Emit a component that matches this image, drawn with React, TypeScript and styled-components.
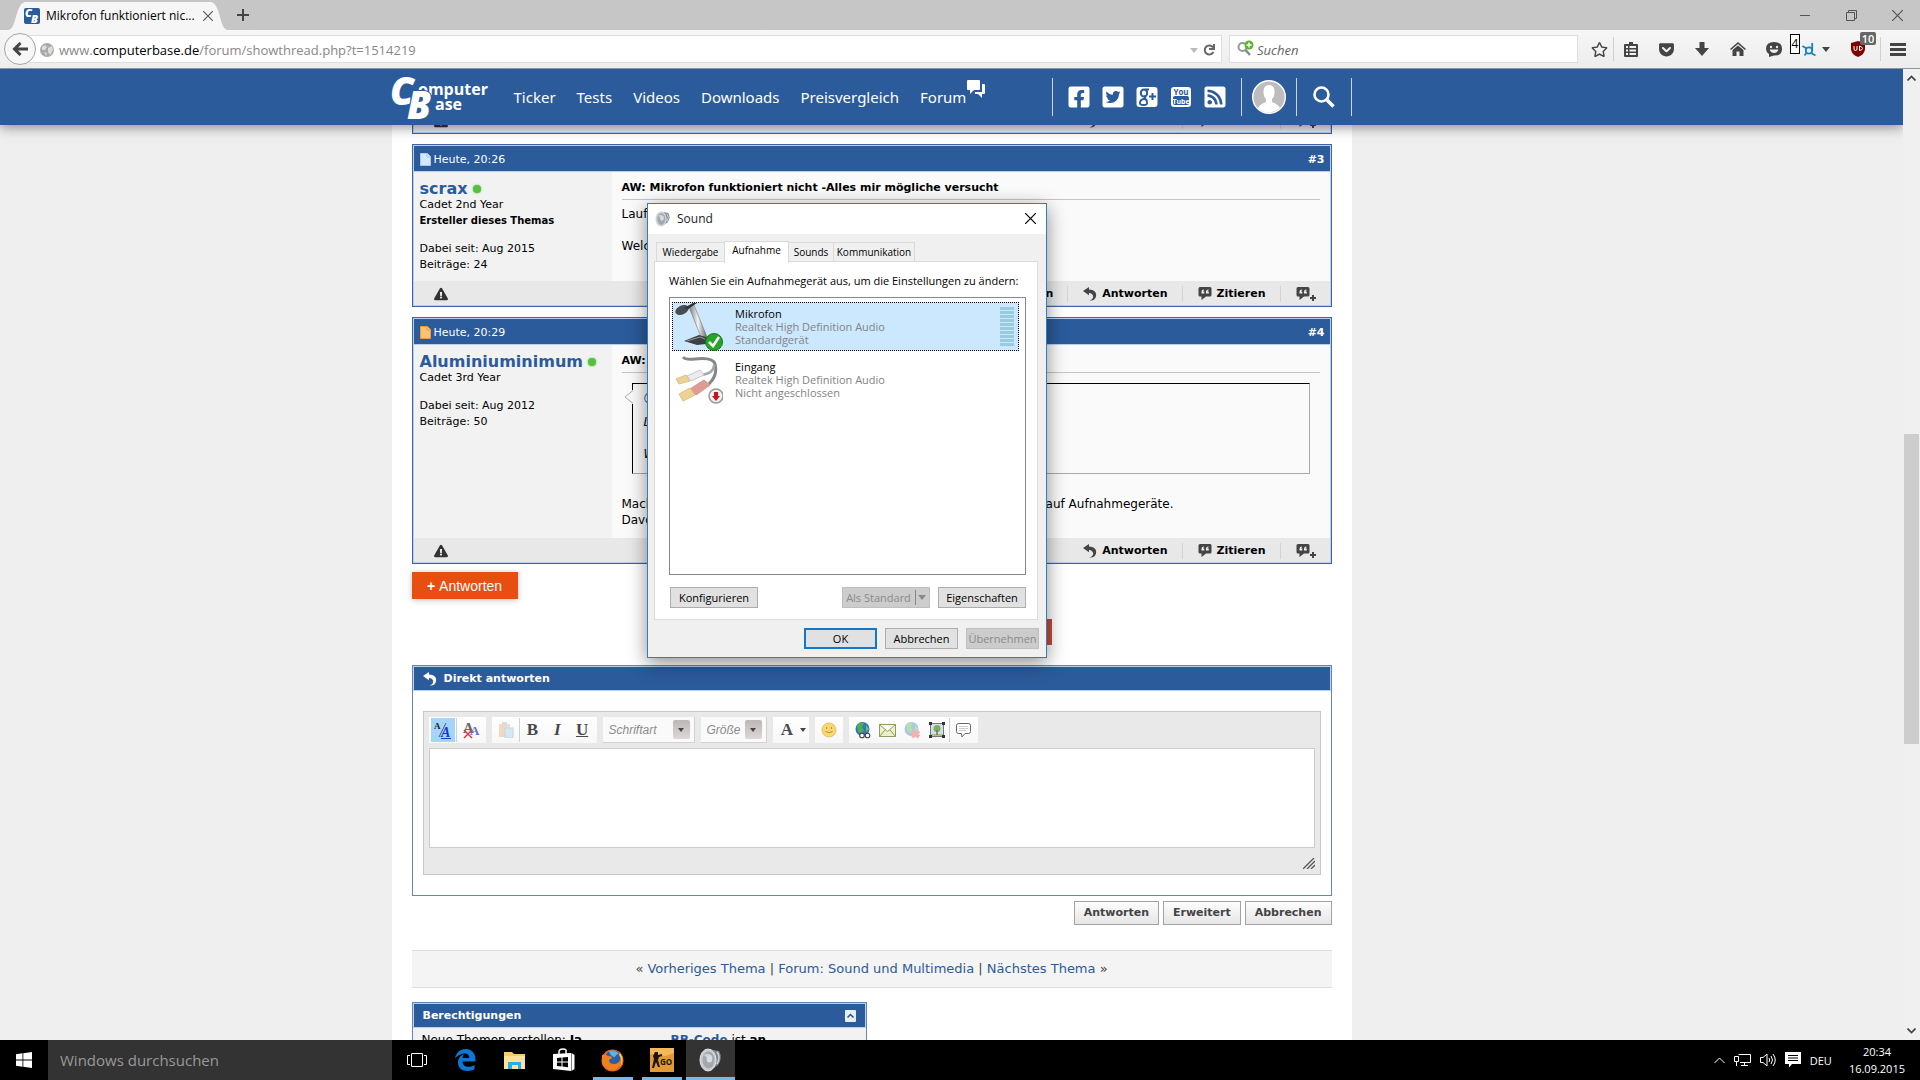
import React from 'react';
import styled, { createGlobalStyle, css } from 'styled-components';
import { FaFacebookSquare, FaTwitterSquare, FaRssSquare, FaRegStar, FaGetPocket, FaExclamationTriangle } from 'react-icons/fa';

const ui = '"Open Sans", "Noto Sans", sans-serif';
const forum = '"DejaVu Sans", Verdana, sans-serif';
const blue = '#2b5b9b';
const pale = '#b9cff0';

const Global = createGlobalStyle`
  *, *::before, *::after { box-sizing: border-box; }
  body { margin: 0; overflow: hidden; }
  button, input, select, textarea { font: inherit; color: inherit; margin: 0; }
  a { color: inherit; text-decoration: none; }
  ul, p, h2, h3 { margin: 0; padding: 0; list-style: none; font-size: inherit; }
`;

const Desktop = styled.div`
  position: relative;
  display: flex;
  flex-direction: column;
  height: 100vh;
  background: #efefef;
  font: 12px/16px ${forum};
  color: #000;
`;

/* ---------- browser chrome ---------- */
const TabBar = styled.div`
  display: flex;
  align-items: center;
  height: 30px;
  flex: none;
  padding-left: 8px;
  background: #c6c6c6;
  font: 12px/16px ${ui};
`;
const BrowserTab = styled.div`
  display: flex;
  align-items: center;
  align-self: flex-end;
  width: 220px;
  height: 28px;
  padding: 0 15px 0 16px;
  gap: 6px;
  background: #f6f6f6;
  clip-path: path('M0 28 C9 28 7 0 18 0 L202 0 C213 0 211 28 220 28 Z');
`;
const TabTitle = styled.span`
  flex: 1;
  white-space: nowrap;
`;
const Plain = styled.button`
  display: inline-flex;
  align-items: center;
  justify-content: center;
  padding: 0;
  border: 0;
  background: none;
  color: #444;
`;
const NewTab = styled(Plain)`
  width: 30px;
`;
const WindowControls = styled.div`
  display: flex;
  margin-left: auto;
  button { width: 46px; height: 28px; }
`;
const NavBar = styled.div`
  display: flex;
  align-items: center;
  flex: none;
  height: 39px;
  padding: 0 5px 0 4px;
  background: linear-gradient(#f6f6f6, #ededed);
  border-bottom: 1px solid #8f959e;
  font: 13px/20px ${ui};
  color: #444;
`;
const BackButton = styled(Plain)`
  position: relative;
  z-index: 1;
  width: 32px;
  height: 32px;
  margin-right: -12px;
  border: 1px solid #a5a5a5;
  border-radius: 50%;
  background: #f7f7f7;
`;
const AddressBar = styled.div`
  display: flex;
  align-items: center;
  flex: 1;
  height: 28px;
  padding: 2px 6px 0 15px;
  gap: 5px;
  background: #fff;
  border: 1px solid #dedede;
`;
const Address = styled.div`
  flex: 1;
  color: #888;
  outline: 0;
  b { font-weight: 400; color: #000; }
`;
const SearchBox = styled.label`
  display: flex;
  align-items: center;
  width: 349px;
  height: 28px;
  margin: 0 7px;
  padding: 0 7px;
  gap: 3px;
  background: #fff;
  border: 1px solid #dedede;
  input {
    flex: 1;
    min-width: 0;
    padding: 2px 0 0;
    border: 0;
    outline: 0;
    background: none;
    font-style: italic;
    font-size: 13px;
    &::placeholder { color: #666; opacity: 1; }
  }
`;
const ToolButton = styled(Plain)<{ $w?: number }>`
  position: relative;
  width: ${p => p.$w ?? 36}px;
  height: 36px;
`;
const AddonButton = styled(ToolButton)`
  justify-content: flex-end;
  padding-right: 6px;
  gap: 6px;
`;
const Separator = styled.span`
  width: 1px;
  height: 24px;
  background: #d0d0d0;
`;
const CountBox = styled.span`
  position: absolute;
  left: -2px;
  top: 3px;
  width: 10px;
  height: 20px;
  border: 1px solid #000;
  background: #fff;
  color: #000;
  font-size: 12px;
  line-height: 18px;
`;
const Badge = styled.span`
  position: absolute;
  right: 4px;
  top: 1px;
  width: 16px;
  height: 13px;
  border-radius: 2px;
  background: #666;
  color: #fff;
  font: 600 11px/13px ${ui};
`;

/* ---------- web page ---------- */
const Viewport = styled.div`
  display: flex;
  flex: 1;
  min-height: 0;
`;
const Page = styled.div`
  flex: 1;
  min-width: 0;
  overflow: hidden;
`;
const Wrap = styled.div`
  display: grid;
  grid-template-columns: minmax(0, 960px) 160px;
  max-width: 1120px;
  margin: 0 auto;
`;
const SiteHeader = styled.header`
  position: relative;
  z-index: 2;
  background: ${blue};
  box-shadow: 0 2px 12px rgba(0, 0, 0, 0.45);
  color: #fff;
`;
const HeaderRow = styled.div`
  display: flex;
  align-items: center;
  height: 56px;
`;
const LogoLink = styled.a`
  display: flex;
  svg { overflow: visible; }
`;
const SiteNav = styled.nav`
  display: flex;
  gap: 21px;
  margin-left: 24px;
  font: 15px/24px "Noto Sans", sans-serif;
`;
const ForumLink = styled.a`
  display: flex;
  gap: 1px;
  svg { margin-top: -5px; }
`;
const HeaderGroup = styled.div`
  display: flex;
  align-items: center;
  height: 38px;
  border-left: 1px solid #c9d6e8;
`;
const Social = styled(HeaderGroup)`
  margin-left: auto;
  padding: 0 14px;
  gap: 10px;
  a { display: flex; }
`;
const HeaderCell = styled(HeaderGroup)<{ $last?: boolean }>`
  width: ${p => (p.$last ? 56 : 55)}px;
  justify-content: center;
  border-right: ${p => (p.$last ? '1px solid #c9d6e8' : '0')};
  a { display: flex; }
`;
const Main = styled.main`
  min-height: 920px;
  padding: 0 20px;
  background: #fff;
`;

const Post = styled.article<{ $cut?: boolean }>`
  margin-top: ${p => (p.$cut ? -17 : 10)}px;
  border: 1px solid #3a66a8;
  box-shadow: inset 0 0 0 1px ${pale};
  padding: 1px;
  ${p => p.$cut && css`border-top: 0; padding-top: 0;`}
`;
const PostHead = styled.div`
  display: flex;
  align-items: center;
  height: 26px;
  padding: 2px 5px 0 6px;
  gap: 3px;
  background: ${blue};
  border-bottom: 1px solid ${pale};
  color: #fff;
  font-size: 11px;
  a { margin-left: auto; font-weight: 700; }
`;
const PostBody = styled.div`
  display: grid;
  grid-template-columns: 198px minmax(0, 1fr);
  background: #fafafa;
`;
const UserInfo = styled.div`
  padding: 9px 6px 8px;
  background: #f2f2f2;
  font-size: 11px;
  strong { font-size: 10px; }
  p + p.gap { margin-top: 12px; }
`;
const UserName = styled.a`
  display: flex;
  align-items: center;
  height: 16px;
  gap: 5px;
  color: ${blue};
  font-size: 16px;
  font-weight: 700;
  &::after {
    content: '';
    width: 8px;
    height: 8px;
    border-radius: 50%;
    background: #55c23f;
    box-shadow: 0 0 2px #55c23f;
  }
`;
const Message = styled.div`
  padding: 8px 10px 10px;
  white-space: nowrap;
`;
const Title = styled.h2`
  height: 20px;
  margin-bottom: 6px;
  border-bottom: 1px solid #c4c4c4;
  font-size: 11px;
`;
const Quote = styled.blockquote`
  position: relative;
  height: 91px;
  margin: 10px 10px 22px;
  padding: 5px 11px;
  border: 1px solid #aaa;
  border-top-color: #000;
  border-left-color: #000;
  font-style: italic;
  p { margin-bottom: 16px; }
  p:first-of-type { margin-bottom: 9px; }
  a { color: ${blue}; }
`;
const QuoteArrow = styled.svg`
  position: absolute;
  left: -9px;
  top: 6px;
  background: #fafafa;
`;
const PostFoot = styled.div`
  display: flex;
  align-items: center;
  height: 24px;
  background: #e8e8e8;
  padding: 1px 0 0 20px;
  color: #444;
`;
const Actions = styled.div`
  display: flex;
  margin-left: auto;
  button + button { border-left: 1px solid #d4d4d4; }
`;
const Action = styled(Plain)`
  height: 16px;
  padding: 0 14px 0 15px;
  gap: 5px;
  color: #000;
  font-weight: 700;
  font-size: 11px;
`;
const ReplyLink = styled.a`
  display: inline-flex;
  align-items: center;
  justify-content: center;
  width: 106px;
  height: 27px;
  margin-top: 8px;
  gap: 4px;
  background: #e84e10;
  box-shadow: 0 1px 6px rgba(0, 0, 0, 0.25);
  color: #fff;
  font: 14px/20px "Liberation Sans", Arial, sans-serif;
`;
const Notice = styled.div`
  width: 360px;
  height: 26px;
  margin: 20px auto;
  background: #c94a36;
`;
const Box = styled.section<{ $half?: boolean }>`
  width: ${p => (p.$half ? '455px' : 'auto')};
  max-width: 100%;
  border: 1px solid #6686b0;
  background: ${p => (p.$half ? '#f2f2f2' : '#fff')};
`;
const BoxHead = styled.h3<{ $spread?: boolean }>`
  display: flex;
  align-items: center;
  height: 25px;
  padding: 1px 9px 0;
  gap: 7px;
  border: 1px solid ${pale};
  background: ${blue};
  color: #fff;
  font-size: 11px;
  justify-content: ${p => (p.$spread ? 'space-between' : 'flex-start')};
`;
const Editor = styled.div`
  margin: 20px 10px;
  padding: 5px;
  border: 1px solid #c9c9c9;
  background: #e9e9e9;
`;
const Tools = styled.div`
  display: flex;
  gap: 6px;
  margin-bottom: 5px;
`;
const ToolGroup = styled.div<{ $w: number }>`
  display: flex;
  align-items: center;
  justify-content: space-around;
  width: ${p => p.$w}px;
  height: 26px;
  padding: 1px 2px;
  background: linear-gradient(#fff, #f7f7f7);
`;
const Tool = styled(Plain)<{ $on?: boolean }>`
  width: 24px;
  height: 24px;
  background: ${p => (p.$on ? '#a5d5fb' : 'none')};
  color: #48484f;
  font: 700 17px/20px "Liberation Serif", serif;
`;
const SelectTool = styled.label<{ $w: number }>`
  display: grid;
  grid-template-columns: 1fr 17px;
  align-items: center;
  width: ${p => p.$w}px;
  height: 26px;
  padding: 0 4px 0 6px;
  background: #fafafa;
  border-bottom: 1px solid #d2d2d2;
  border-right: 1px solid #d2d2d2;
  select {
    grid-area: 1 / 1 / 2 / 3;
    appearance: none;
    padding: 0;
    border: 0;
    background: none;
    color: #8a8a8a;
    font: italic 12px/20px "Liberation Sans", Arial, sans-serif;
  }
  span {
    grid-area: 1 / 2 / 2 / 3;
    display: flex;
    align-items: center;
    justify-content: center;
    height: 19px;
    border-radius: 2px;
    background: linear-gradient(#bdb6b6, #dcd8d8);
    pointer-events: none;
  }
`;
const Field = styled.textarea`
  display: block;
  width: 100%;
  height: 100px;
  border: 1px solid #ccc;
  background: #fff;
  resize: none;
  outline: 0;
`;
const Grip = styled.svg`
  display: block;
  margin: 10px 0 0 auto;
`;
const FormButtons = styled.div`
  display: flex;
  justify-content: flex-end;
  gap: 4px;
  margin: 5px 0 25px;
`;
const FormButton = styled.button`
  height: 24px;
  padding: 0 9px;
  border: 1px solid #a3a3a3;
  background: linear-gradient(#fdfdfd, #e6e6e6);
  color: #444;
  font-size: 11px;
  font-weight: 700;
`;
const Pager = styled.nav`
  margin-bottom: 14px;
  padding: 10px 0;
  border-top: 1px solid #ddd;
  border-bottom: 1px solid #ddd;
  background: #f4f4f4;
  text-align: center;
  color: #444;
  font-size: 13px;
  a { color: ${blue}; }
`;
const Rights = styled.div`
  display: grid;
  grid-template-columns: 249px 1fr;
  padding: 4px 9px;
  a { color: ${blue}; font-weight: 700; }
`;
const Scrollbar = styled.div`
  display: flex;
  flex-direction: column;
  align-items: center;
  justify-content: space-between;
  width: 17px;
  padding: 6px 0;
  background: #f0f0f0;
  z-index: 3;
`;
const Thumb = styled.div`
  width: 15px;
  height: 310px;
  margin-bottom: -68px;
  background: #cdcdcd;
`;

/* ---------- sound dialog ---------- */
const Dialog = styled.section`
  position: absolute;
  left: 647px;
  top: 203px;
  z-index: 10;
  width: 400px;
  border: 1px solid #2d7fc0;
  background: #f0f0f0;
  box-shadow: 0 5px 18px rgba(0, 0, 0, 0.45);
  font: 11px/13px ${ui};
`;
const DialogTitle = styled.div`
  display: flex;
  align-items: center;
  height: 30px;
  padding: 0 10px 1px 7px;
  gap: 6px;
  background: #fff;
  color: #222;
  font-size: 12px;
  button { margin-left: auto; color: #000; }
`;
const Tabs = styled.div`
  display: flex;
  align-items: flex-end;
  height: 27px;
  padding: 0 8px;
`;
const Tab = styled.button<{ $on?: boolean; $w: number }>`
  width: ${p => p.$w}px;
  height: ${p => (p.$on ? 22 : 19)}px;
  margin: ${p => (p.$on ? '0 0 -2px' : '0')};
  padding: ${p => (p.$on ? '0 0 4px' : '1px 0 0')};
  border: 1px solid #d9d9d9;
  border-bottom: 0;
  background: ${p => (p.$on ? '#fff' : '#f0f0f0')};
  z-index: ${p => (p.$on ? 1 : 0)};
  color: #000;
  font-size: 10px;
  & + & { margin-left: -1px; }
`;
const Panel = styled.div`
  margin: 0 8px 0 6px;
  padding: 12px 11px 11px 14px;
  border: 1px solid #dcdcdc;
  background: #fff;
`;
const DeviceList = styled.ul`
  height: 278px;
  margin: 10px 0 12px;
  padding: 4px 6px 4px 2px;
  border: 1px solid #828790;
`;
const Device = styled.li<{ $on?: boolean }>`
  display: flex;
  align-items: center;
  height: 49px;
  margin-bottom: 4px;
  padding: 0 4px 0 2px;
  gap: 12px;
  border: 1px dotted ${p => (p.$on ? '#000' : 'transparent')};
  background: ${p => (p.$on ? '#cce8ff' : 'none')};
  color: #838383;
  strong { display: block; font-weight: 400; color: #000; }
`;
const Level = styled.span`
  width: 14px;
  height: 39px;
  margin-left: auto;
  background: repeating-linear-gradient(#99cbe0 0 3px, transparent 3px 4px);
`;
const ButtonRow = styled.div<{ $foot?: boolean }>`
  display: flex;
  justify-content: flex-end;
  gap: 8px;
  padding: ${p => (p.$foot ? '8px 7px 8px' : '0 0 0 1px')};
  button:first-child { margin-right: ${p => (p.$foot ? '0' : 'auto')}; }
`;
const WinButton = styled.button<{ $w: number; $default?: boolean }>`
  display: flex;
  align-items: center;
  justify-content: center;
  gap: 4px;
  width: ${p => p.$w}px;
  height: 21px;
  padding: 0;
  border: ${p => (p.$default ? '2px solid #0f78d0' : '1px solid #adadad')};
  background: #e1e1e1;
  color: #000;
  &:disabled { background: #cccccc; border-color: #bfbfbf; color: #8a8a8a; }
  i { width: 1px; height: 15px; margin-right: -2px; background: #888; }
`;

/* ---------- taskbar ---------- */
const Taskbar = styled.footer`
  display: flex;
  align-items: stretch;
  flex: none;
  height: 40px;
  z-index: 5;
  background: #000;
  color: #fff;
  font: 11px/17px ${ui};
`;
const TaskButton = styled(Plain)<{ $open?: boolean; $active?: boolean }>`
  width: 49px;
  background: ${p => (p.$active ? '#333' : 'none')};
  border-bottom: 3px solid transparent;
  border-top: 3px solid transparent;
  border-bottom-color: ${p => (p.$active ? '#76b9ed' : 'transparent')};
  background-image: ${p => (p.$open ? 'linear-gradient(#76b9ed, #76b9ed)' : 'none')};
  background-size: 40px 3px;
  background-position: 50% 100%;
  background-repeat: no-repeat;
  background-origin: border-box;
  color: #fff;
`;
const StartButton = styled(Plain)`
  width: 48px;
  color: #fff;
`;
const TaskSearch = styled.input`
  width: 344px;
  padding: 0 12px;
  border: 0;
  border-radius: 0;
  outline: 0;
  background: #333;
  font-size: 15px;
  &::placeholder { color: #999; opacity: 1; }
`;
const Tray = styled.div`
  display: flex;
  align-items: center;
  gap: 9px;
  margin-left: auto;
  padding-right: 15px;
  time { margin-left: 8px; text-align: center; }
`;

/* ---------- drawings ---------- */
const CbMark = () => (
  <svg width="16" height="16" viewBox="0 0 16 16" overflow="visible">
    <rect width="16" height="16" rx="2" fill={blue} />
    <text x="1" y="9" fontFamily="Open Sans" fontWeight="800" fontStyle="italic" fontSize="11" fill="#fff">C</text>
    <text x="7" y="15" fontFamily="Open Sans" fontWeight="800" fontStyle="italic" fontSize="11" fill="#fff">B</text>
  </svg>
);
const Logo = () => (
  <svg width="98" height="46" viewBox="0 0 98 46" fill="#fff" fontFamily="Open Sans" fontWeight="700">
    <text x="-2" y="31" fontSize="38" fontWeight="800" fontStyle="italic">C</text>
    <text x="26" y="21" fontSize="16" stroke={blue} strokeWidth="2" paintOrder="stroke">omputer</text>
    <text x="43" y="36" fontSize="16">ase</text>
    <text x="15" y="45" fontSize="38" fontWeight="800" fontStyle="italic" stroke={blue} strokeWidth="2" paintOrder="stroke">B</text>
  </svg>
);
const Cross = ({ s = 10, c = '#555' }: { s?: number; c?: string }) => (
  <svg width={s} height={s} viewBox="0 0 10 10" stroke={c} strokeWidth="1.1"><path d="M0 0L10 10M10 0L0 10" /></svg>
);
const Globe = () => (
  <svg width="14" height="14" viewBox="0 0 14 14"><circle cx="7" cy="7" r="7" fill="#aaa" /><path d="M2 4l3-2 2 2-2 3-3 0zM8 5l4-2 1 4-3 5-2-3zM4 9l3 1-1 3z" fill="#ddd" /></svg>
);
const ReplyIcon = ({ c = '#444' }: { c?: string }) => (
  <svg width="14" height="14" viewBox="0 0 14 14" fill={c}><path d="M0 4L6 0V2.500C11 2.500 14 5.500 13 9.500C12.500 12 10 14 6.500 13.500C10 12.500 11 10 9.500 7.800C8.700 6.500 7.500 6 6 6V8.300Z" /></svg>
);
const QuoteIcon = ({ plus }: { plus?: boolean }) => (
  <svg width={plus ? 20 : 14} height="14" viewBox={plus ? '0 0 20 14' : '0 0 14 14'} fill="#444">
    <path d="M2 0H12Q13.500 0 13.500 1.500V8Q13.500 9.500 12 9.500H8L3.500 13V9.500H2Q.5 9.500 .5 8V1.500Q.5 0 2 0Z" />
    <path d="M3.500 6.500V4.500Q3.500 2.500 6 2.500V3.600Q5 3.600 5 4.500H6.300V6.500ZM8 6.500V4.500Q8 2.500 10.500 2.500V3.600Q9.500 3.600 9.500 4.500H10.800V6.500Z" fill="#eee" />
    {plus && <path d="M16 8H18V10H20V12H18V14H16V12H14V10H16Z" />}
  </svg>
);
const GooglePlus = () => (
  <svg width="24" height="24" viewBox="0 0 24 24" fill="none" stroke={blue}>
    <rect x="1.500" y="2" width="21" height="20" rx="3" fill="#fff" stroke="none" />
    <ellipse cx="9" cy="8" rx="3.200" ry="3.500" strokeWidth="2" />
    <path d="M10 4.500H14M10 11Q9 12 11 13.500M12 17Q12 14 9 14T5 17T8.500 20T12 17Z" strokeWidth="1.800" />
    <path d="M17.500 8V15M14 11.500H21" strokeWidth="2" />
  </svg>
);
const PageIcon = ({ c, s }: { c: string; s: string }) => (
  <svg width="11" height="13" viewBox="0 0 11 13"><path d="M.5 .5H7.500L10.500 3.500V12.500H.5Z" fill={c} stroke={s} /><path d="M7 1V4H10" fill="none" stroke={s} /></svg>
);
const Warn = () => <FaExclamationTriangle size={14} color="#333" />;
const Speaker = ({ s = 16 }: { s?: number }) => (
  <svg width={s} height={s} viewBox="0 0 24 24">
    <path d="M9 1L20 3Q24 10 19 17L11 23Z" fill="#7f858d" />
    <path d="M18 4Q22 9 18 16" stroke="#d4d8dc" strokeWidth="1.500" fill="none" />
    <ellipse cx="9" cy="12" rx="8" ry="11" fill="#c9cdd2" stroke="#e2e4e7" strokeWidth="1" />
    <ellipse cx="9.500" cy="12" rx="6" ry="8.500" fill="#a2a8b0" />
    <path d="M5 7Q9 4 13 8L10 12Z" fill="#ced3d9" />
    <ellipse cx="10.500" cy="11" rx="2.800" ry="3.600" fill="#d8dce0" />
  </svg>
);
const Mic = () => (
  <svg width="48" height="48" viewBox="0 0 48 48">
    <defs><linearGradient id="arm" x1="0" x2="1"><stop offset="0" stopColor="#777" /><stop offset=".5" stopColor="#f4f4f4" /><stop offset="1" stopColor="#666" /></linearGradient></defs>
    <path d="M14 4L19 2L32 34H26Z" fill="url(#arm)" stroke="#777" strokeWidth=".6" />
    <path d="M9 38L24 32L34 35L31 41L22 42Z" fill="#3c3f43" />
    <path d="M12 38L25 34L30 36" stroke="#999" fill="none" />
    <ellipse cx="7" cy="7" rx="7" ry="4.500" transform="rotate(-25 7 7)" fill="#4a4c4f" />
    <path d="M9 5L18 0H22L13 6Z" fill="#303234" />
    <circle cx="39" cy="39" r="8.500" fill="#29a329" stroke="#0f7a12" />
    <path d="M34 39L38 43L44 34" stroke="#fff" strokeWidth="2.600" fill="none" />
  </svg>
);
const Cable = () => (
  <svg width="48" height="48" viewBox="0 0 48 48" fill="none">
    <path d="M8 1Q10 4 20 3Q38 1 40 8Q43 19 34 28" stroke="#85888b" strokeWidth="3" />
    <path d="M39 9Q39 17 27 19" stroke="#a4a7aa" strokeWidth="2.500" />
    <path d="M12 20L25 14L29 19L16 25Z" fill="#ececf0" stroke="#c7c9ce" />
    <path d="M15 33L29 24L35 29L21 39Z" fill="#e39a95" stroke="#dc8e8a" />
    <path d="M1 23L11 19L15 25L4 28Z" fill="#ead295" stroke="#dcc389" />
    <path d="M4 38L15 32L20 39L8 45Z" fill="#ecd296" stroke="#dcc080" />
    <circle cx="41" cy="40" r="7" fill="#f0f0f0" stroke="#999" strokeWidth="1.500" />
    <path d="M39 36H43V40H45L41 45L37 40H39Z" fill="#c4161c" />
  </svg>
);
const Chevron = ({ down }: { down?: boolean }) => (
  <svg width="9" height="6" viewBox="0 0 9 6" fill="none" stroke="#444" strokeWidth="1.700"><path d={down ? 'M.5 .5L4.500 4.500L8.500 .5' : 'M.5 5.500L4.500 1.500L8.500 5.500'} /></svg>
);
const Caret = ({ c = '#444' }: { c?: string }) => <svg width="8" height="5" viewBox="0 0 8 5"><path d="M0 0H8L4 5Z" fill={c} /></svg>;
const SmallCaret = () => <svg width="6" height="4" viewBox="0 0 6 4"><path d="M0 0H6L3 4Z" fill="#444" /></svg>;
const EarthTool = ({ faded }: { faded?: boolean }) => (
  <svg width="16" height="17" viewBox="0 0 16 17" opacity={faded ? 0.4 : 1}>
    <circle cx="7.500" cy="7" r="7" fill="#3577bd" /><path d="M2 3Q6-1 9 1L7 5L9 8L6 12L3 9Z" fill="#50ae52" /><path d="M11 3L14 7L11 10Z" fill="#70be55" />
    {faded ? <path d="M8 9L15 15M15 9L8 15" stroke="#e34b4b" strokeWidth="4" /> : <g fill="#fff" stroke="#444" strokeWidth="1.100"><circle cx="7" cy="13.500" r="2.300" /><circle cx="12.500" cy="13.500" r="2.300" /></g>}
  </svg>
);

const Foot = ({ edit }: { edit?: boolean }) => (
  <PostFoot>
    <Plain aria-label="Beitrag melden"><Warn /></Plain>
    <Actions>
      {edit && <Action>Bearbeiten</Action>}
      <Action><ReplyIcon />Antworten</Action>
      <Action><QuoteIcon />Zitieren</Action>
      <Action aria-label="Mehrfachzitat"><QuoteIcon plus /></Action>
    </Actions>
  </PostFoot>
);

export default function App() {
  return (
    <Desktop>
      <Global />
      <TabBar>
        <BrowserTab><CbMark /><TabTitle>Mikrofon funktioniert nic...</TabTitle><Plain aria-label="Tab schließen"><Cross s={10} /></Plain></BrowserTab>
        <NewTab aria-label="Neuer Tab"><svg width="12" height="12" stroke="#444" strokeWidth="2"><path d="M6 0V12M0 6H12" /></svg></NewTab>
        <WindowControls>
          <Plain aria-label="Minimieren"><svg width="10" height="10" stroke="#555"><path d="M0 5.500H10" /></svg></Plain>
          <Plain aria-label="Verkleinern"><svg width="11" height="11" fill="none" stroke="#555"><path d="M.5 2.500H8.500V10.500H.5ZM2.500 2.500V.5H10.500V8.500H8.500" /></svg></Plain>
          <Plain aria-label="Schließen"><Cross s={11} /></Plain>
        </WindowControls>
      </TabBar>
      <NavBar>
        <BackButton aria-label="Zurück"><svg width="16" height="14" viewBox="0 0 16 14" fill="none" stroke="#444" strokeWidth="3"><path d="M16 7H3M8.500 1L2.500 7L8.500 13" /></svg></BackButton>
        <AddressBar>
          <Globe />
          <Address role="textbox" aria-label="Adresse" contentEditable suppressContentEditableWarning spellCheck={false}>www.<b>computerbase.de</b>/forum/showthread.php?t=1514219</Address>
          <Caret c="#bbb" />
          <Plain aria-label="Neu laden"><svg width="12" height="12" viewBox="0 0 12 12" fill="none" stroke="#666" strokeWidth="2"><path d="M10 3.500A4.500 4.500 0 1 0 10.300 8" /><path d="M11 0V5H6" /></svg></Plain>
        </AddressBar>
        <SearchBox>
          <svg width="17" height="18" viewBox="0 0 17 18"><circle cx="5.500" cy="7" r="4" fill="none" stroke="#999" strokeWidth="2" /><path d="M8.500 10L13 15" stroke="#888" strokeWidth="2.500" /><circle cx="12" cy="5" r="4.500" fill="#5cb531" /><path d="M12 2.500V7.500M9.500 5H14.500" stroke="#fff" strokeWidth="1.400" /></svg>
          <input placeholder="Suchen" aria-label="Suchen" />
        </SearchBox>
        <ToolButton $w={28} aria-label="Lesezeichen"><FaRegStar size={17} /></ToolButton>
        <Separator />
        <ToolButton $w={34} aria-label="Lesezeichenliste"><svg width="14" height="15" viewBox="0 0 14 15"><path d="M5 0H9V2H13Q14 2 14 3V14Q14 15 13 15H1Q0 15 0 14V3Q0 2 1 2H5Z" fill="#444" /><path d="M2 5H4M5.500 5H12M2 8.500H4M5.500 8.500H12M2 12H4M5.500 12H12" stroke="#f3f3f3" strokeWidth="1.800" /></svg></ToolButton>
        <ToolButton aria-label="Pocket"><FaGetPocket size={17} /></ToolButton>
        <ToolButton aria-label="Downloads"><svg width="14" height="14" viewBox="0 0 14 14" fill="#444"><path d="M4.500 0H9.500V6H14L7 14L0 6H4.500Z" /></svg></ToolButton>
        <ToolButton aria-label="Startseite"><svg width="16" height="14" viewBox="0 0 16 14" fill="#444"><path d="M8 0L16 7L15 8L8 2L1 8L0 7Z" /><path d="M8 3.500L13.500 8V14H9.500V9.500H6.500V14H2.500V8Z" /></svg></ToolButton>
        <ToolButton aria-label="Hello"><svg width="16" height="15" viewBox="0 0 16 15"><path d="M8 0Q16 0 16 7T8 13.500L3 15L3 12Q0 10 0 7Q0 0 8 0Z" fill="#444" /><circle cx="5" cy="5" r="1.200" fill="#eee" /><circle cx="11" cy="5" r="1.200" fill="#eee" /><path d="M3.500 7.500H12.500Q11 11 8 11T3.500 7.500Z" fill="#eee" /></svg></ToolButton>
        <AddonButton $w={44} aria-label="Erweiterung">
          <CountBox>4</CountBox>
          <svg width="15" height="15" viewBox="0 0 15 15" fill="none" stroke="#1b82bd" strokeWidth="1.800"><circle cx="8" cy="8.500" r="3.200" /><path d="M11.200 9V1M5.500 6.500L1.500 4M10 11L14.500 13.500M5.500 11L3.500 13.500" /></svg><Caret />
        </AddonButton>
        <ToolButton $w={44} aria-label="uBlock">
          <svg width="14" height="16" viewBox="0 0 14 16"><path d="M7 0L14 2V8Q14 13 7 16Q0 13 0 8V2Z" fill="#800000" /><path d="M3 5V8Q3 9.500 4.500 9.500T6 8V5M8.500 5V9.500Q11.500 9 11.500 7.500T8.500 5" fill="none" stroke="#fff" /></svg>
          <Badge>10</Badge>
        </ToolButton>
        <Separator />
        <ToolButton $w={34} aria-label="Menü"><svg width="16" height="13" stroke="#444" strokeWidth="3"><path d="M0 1.500H16M0 6.500H16M0 11.500H16" /></svg></ToolButton>
      </NavBar>

      <Viewport>
        <Page>
          <SiteHeader>
            <Wrap>
              <HeaderRow>
                <LogoLink href="#home" aria-label="ComputerBase"><Logo /></LogoLink>
                <SiteNav>
                  <a href="#ticker">Ticker</a><a href="#tests">Tests</a><a href="#videos">Videos</a><a href="#downloads">Downloads</a><a href="#preise">Preisvergleich</a>
                  <ForumLink href="#forum">Forum<svg width="19" height="18" viewBox="0 0 19 18" fill="#fff"><path d="M1 0H12Q13 0 13 1V9Q13 10 12 10H7L3 14V10H1Q0 10 0 9V1Q0 0 1 0Z" /><path d="M15 4H17Q18 4 18 5V13Q18 14 17 14H15V18L11 14H8V12H15Z" /></svg></ForumLink>
                </SiteNav>
                <Social>
                  <a href="#fb" aria-label="Facebook"><FaFacebookSquare size={24} /></a>
                  <a href="#tw" aria-label="Twitter"><FaTwitterSquare size={24} /></a>
                  <a href="#gp" aria-label="Google+"><GooglePlus /></a>
                  <a href="#yt" aria-label="YouTube"><svg width="24" height="24" viewBox="0 0 24 24"><rect x="2" y="2" width="20" height="20" rx="3" fill="#fff" /><rect x="4" y="11" width="16" height="9" rx="2" fill={blue} /><text x="12" y="10" textAnchor="middle" fontFamily="Open Sans" fontSize="8" fontWeight="700" fill={blue}>You</text><text x="12" y="18.500" textAnchor="middle" fontFamily="Open Sans" fontSize="7" fontWeight="700" fill="#fff">Tube</text></svg></a>
                  <a href="#rss" aria-label="RSS"><FaRssSquare size={24} /></a>
                </Social>
                <HeaderCell><a href="#profil" aria-label="Profil"><svg width="34" height="34" viewBox="0 0 34 34"><circle cx="17" cy="17" r="16.300" fill="#bdbdbd" stroke="#fff" strokeWidth="1.400" /><path d="M17 5Q22.500 5 22.500 12Q22.500 17 20 19V22Q26 24 28 28Q17 37 6 28Q8 24 14 22V19Q11.500 17 11.500 12Q11.500 5 17 5Z" fill="#fff" /></svg></a></HeaderCell>
                <HeaderCell $last><a href="#suche" aria-label="Suche"><svg width="22" height="22" viewBox="0 0 22 22" fill="none" stroke="#fff"><circle cx="8.500" cy="8.500" r="7" strokeWidth="2.600" /><path d="M13.500 13.500L20.500 20.500" strokeWidth="3.600" /></svg></a></HeaderCell>
              </HeaderRow>
            </Wrap>
          </SiteHeader>
          <Wrap>
            <Main>
              <Post $cut><Foot /></Post>
              <Post>
                <PostHead><PageIcon c="#d5e8fa" s="#a9c8ea" />Heute, 20:26<a href="#p3">#3</a></PostHead>
                <PostBody>
                  <UserInfo>
                    <UserName href="#scrax">scrax</UserName>
                    <p>Cadet 2nd Year</p><p><strong>Ersteller dieses Themas</strong></p>
                    <p className="gap">Dabei seit: Aug 2015</p><p>Beiträge: 24</p>
                  </UserInfo>
                  <Message><Title>AW: Mikrofon funktioniert nicht -Alles mir mögliche versucht</Title><p>Laufwerk</p><br /><p>Welche</p></Message>
                </PostBody>
                <Foot edit />
              </Post>
              <Post>
                <PostHead><PageIcon c="#fcc274" s="#f0983c" />Heute, 20:29<a href="#p4">#4</a></PostHead>
                <PostBody>
                  <UserInfo>
                    <UserName href="#alu">Aluminiuminimum</UserName>
                    <p>Cadet 3rd Year</p>
                    <p className="gap">Dabei seit: Aug 2012</p><p>Beiträge: 50</p>
                  </UserInfo>
                  <Message>
                    <Title>AW: Mikrofon</Title>
                    <Quote><QuoteArrow width="9" height="14" viewBox="0 0 9 14" fill="none" stroke="#aaa"><path d="M9 .5L1 7L9 13.500" /></QuoteArrow><p><a href="#zitat">@ scrax</a></p><p>Laufwerk</p><p>Welche</p></Quote>
                    <p>Mache einen Rechtsklick auf das Lautsprechersymbol und klicke dann auf Aufnahmegeräte.</p>
                    <p>Davon</p>
                  </Message>
                </PostBody>
                <Foot />
              </Post>
              <ReplyLink href="#antworten"><b>+</b>Antworten</ReplyLink>
              <Notice />
              <Box>
                <BoxHead><ReplyIcon c="#fff" />Direkt antworten</BoxHead>
                <Editor>
                  <Tools>
                    <ToolGroup $w={57}>
                      <Tool $on aria-label="Editor umschalten"><svg width="18" height="18" fontFamily="Liberation Serif" fontWeight="700" fontStyle="italic"><text x="0" y="8" fontSize="9" fontStyle="normal" fill="#222">A</text><path d="M5 16L12 2" stroke="#556" /><text x="7" y="16" fontSize="14" fill="#1438d8">A</text><path d="M7 17.500H17" stroke="#1438d8" /></svg></Tool>
                      <Separator />
                      <Tool aria-label="Formatierung entfernen"><svg width="18" height="18" fontFamily="Liberation Serif" fontWeight="700"><text x="1" y="12" fontSize="15" fill="#666">A</text><text x="8" y="14" fontSize="13" fill="#5a6fdd">A</text><path d="M2 9L10 17M10 9L2 17" stroke="#df3a34" strokeWidth="1.500" /></svg></Tool>
                    </ToolGroup>
                    <ToolGroup $w={105}>
                      <Tool aria-label="Einfügen"><svg width="16" height="16" opacity=".5"><rect x="1" y="2" width="11" height="13" rx="1" fill="#e6b987" /><rect x="4" y="0" width="5" height="4" fill="#bbb" /><rect x="7" y="6" width="8" height="10" fill="#b7d5ef" stroke="#8fb5d8" /></svg></Tool>
                      <Separator />
                      <Tool>B</Tool><Tool><i>I</i></Tool><Tool><u>U</u></Tool>
                    </ToolGroup>
                    <SelectTool $w={92}><select aria-label="Schriftart"><option>Schriftart</option></select><span><SmallCaret /></span></SelectTool>
                    <SelectTool $w={66}><select aria-label="Größe"><option>Größe</option></select><span><SmallCaret /></span></SelectTool>
                    <ToolGroup $w={36}><Tool aria-label="Schriftfarbe">A</Tool><SmallCaret /></ToolGroup>
                    <ToolGroup $w={28}><Tool aria-label="Smilies"><svg width="16" height="16" viewBox="0 0 16 16"><circle cx="8" cy="8" r="7" fill="#f8d873" stroke="#e9bf62" /><path d="M4.500 9.500Q8 12 11.500 9.500M5.500 5V7M10.500 5V7" stroke="#b58b38" fill="none" /></svg></Tool></ToolGroup>
                    <ToolGroup $w={129}>
                      <Tool aria-label="Link"><EarthTool /></Tool>
                      <Tool aria-label="E-Mail"><svg width="17" height="13" fill="#eef0c8" stroke="#8e9b62"><path d="M.5 .5H16.500V12.500H.5ZM.5 .5L8.500 7.500L16.500 .5M.5 12.500L6 6M16.500 12.500L11 6" /></svg></Tool>
                      <Tool aria-label="Link entfernen"><EarthTool faded /></Tool>
                      <Tool aria-label="Bild"><svg width="16" height="16"><rect x="1.500" y="1.500" width="13" height="13" fill="#cfe0ee" stroke="#777" /><path d="M2 12H14V14H2Z" fill="#a5c47e" /><circle cx="8" cy="6.500" r="3.500" fill="#7fae62" /><path d="M8 8V13" stroke="#8b6d4b" strokeWidth="1.500" /><path d="M0 0H3V3H0ZM13 0H16V3H13ZM0 13H3V16H0ZM13 13H16V16H13Z" fill="#333" /></svg></Tool>
                      <Separator />
                      <Tool aria-label="Zitat"><svg width="15" height="15" fill="#fff" stroke="#666"><path d="M2.500 .5H12.500Q14.500 .5 14.500 2.500V8.500Q14.500 10.500 12.500 10.500H9L6 14L5.500 10.500H2.500Q.5 10.500 .5 8.500V2.500Q.5 .5 2.500 .5Z" /><path d="M3 3.500H12M3 5.500H12M3 7.500H10" stroke="#ccc" /></svg></Tool>
                    </ToolGroup>
                  </Tools>
                  <Field aria-label="Nachricht" />
                  <Grip width="12" height="11" stroke="#555" strokeWidth="1.300"><path d="M0 11L11 0M4 11L12 3M8 11L12 7" /></Grip>
                </Editor>
              </Box>
              <FormButtons><FormButton>Antworten</FormButton><FormButton>Erweitert</FormButton><FormButton>Abbrechen</FormButton></FormButtons>
              <Pager>« <a href="#prev">Vorheriges Thema</a> | <a href="#sub">Forum: Sound und Multimedia</a> | <a href="#next">Nächstes Thema</a> »</Pager>
              <Box $half>
                <BoxHead $spread>Berechtigungen<Plain aria-label="Einklappen"><svg width="11" height="12"><rect width="11" height="12" rx="1" fill="#e4f0f4" /><path d="M2.500 7.500L5.500 4.500L8.500 7.500" stroke="#27577e" strokeWidth="1.500" fill="none" /></svg></Plain></BoxHead>
                <Rights><span>Neue Themen erstellen: <b>Ja</b></span><span><a href="#bb">BB-Code</a> ist <b>an</b></span></Rights>
              </Box>
            </Main>
          </Wrap>
        </Page>
        <Scrollbar><Chevron /><Thumb /><Chevron down /></Scrollbar>
      </Viewport>

      <Dialog role="dialog" aria-label="Sound">
        <DialogTitle><Speaker />Sound<Plain aria-label="Schließen"><Cross s={11} c="#000" /></Plain></DialogTitle>
        <Tabs role="tablist">
          <Tab role="tab" $w={69}>Wiedergabe</Tab><Tab role="tab" aria-selected $on $w={65}>Aufnahme</Tab><Tab role="tab" $w={46}>Sounds</Tab><Tab role="tab" $w={82}>Kommunikation</Tab>
        </Tabs>
        <Panel>
          <p>Wählen Sie ein Aufnahmegerät aus, um die Einstellungen zu ändern:</p>
          <DeviceList role="listbox" aria-label="Aufnahmegeräte">
            <Device role="option" aria-selected $on><Mic /><div><strong>Mikrofon</strong>Realtek High Definition Audio<br />Standardgerät</div><Level /></Device>
            <Device role="option" aria-selected={false}><Cable /><div><strong>Eingang</strong>Realtek High Definition Audio<br />Nicht angeschlossen</div></Device>
          </DeviceList>
          <ButtonRow><WinButton $w={88}>Konfigurieren</WinButton><WinButton $w={88} disabled>Als Standard<i /><Caret c="#888" /></WinButton><WinButton $w={88}>Eigenschaften</WinButton></ButtonRow>
        </Panel>
        <ButtonRow $foot><WinButton $w={73} $default>OK</WinButton><WinButton $w={73}>Abbrechen</WinButton><WinButton $w={73} disabled>Übernehmen</WinButton></ButtonRow>
      </Dialog>

      <Taskbar>
        <StartButton aria-label="Start"><svg width="16" height="16" viewBox="0 0 16 16" fill="#fff"><path d="M0 2.200L6.500 1.300V7.600H0ZM7.300 1.200L16 0V7.600H7.300ZM0 8.400H6.500V14.700L0 13.800ZM7.300 8.400H16V16L7.300 14.800Z" /></svg></StartButton>
        <TaskSearch placeholder="Windows durchsuchen" aria-label="Windows durchsuchen" />
        <TaskButton aria-label="Taskansicht"><svg width="20" height="14" fill="none" stroke="#fff"><path d="M4.500 .5H15.500V13.500H4.500ZM3 2.500H.5V11.500H3M17 2.500H19.500V11.500H17" /></svg></TaskButton>
        <TaskButton aria-label="Edge"><svg width="21" height="22" viewBox="0 0 21 22" fill="#0a78d7"><path d="M0 9.500C1 4 5 0 10.500 0C17 0 20.500 4.500 20.500 10V12.500H7.500C7.700 16 10 17.800 13.500 17.800C16 17.800 18 17 19.500 16V20.300C17.500 21.500 15 22 12.500 22C6.500 22 3 18.500 3 13.500C3 9.500 5.500 6.500 9 5.300C8 6.500 7.700 7.800 7.600 9H14.300C14.300 6 12.800 4.500 10 4.500C6 4.500 2.500 6.500 0 9.500Z" /></svg></TaskButton>
        <TaskButton aria-label="Explorer"><svg width="22" height="19" viewBox="0 0 22 19"><path d="M0 1H8L10 3H21V18H0Z" fill="#f3cf68" /><path d="M0 5H21V18H0Z" fill="#fde29a" /><path d="M4 18V11H17V18H14V14H8V18Z" fill="#29aee4" /></svg></TaskButton>
        <TaskButton aria-label="Store"><svg width="22" height="24" viewBox="0 0 22 24"><path d="M6 6V4Q6 1 10 1T13 4V6" fill="none" stroke="#fff" strokeWidth="1.500" /><path d="M0 6L18 5V23L0 21ZM18.500 5L21.500 7V21L18.500 23Z" fill="#fff" /><path d="M4 10L8.500 9.600V13.500H4ZM9.500 9.500L15 9V13.500H9.500ZM4 14.500H8.500V18.500L4 18ZM9.500 14.500H15V19.200L9.500 18.600Z" fill="#000" /></svg></TaskButton>
        <TaskButton $open aria-label="Firefox"><svg width="23" height="23" viewBox="0 0 23 23"><circle cx="11.500" cy="11.500" r="11" fill="#e8641b" /><circle cx="12" cy="9.500" r="8" fill="#2c5ea8" /><path d="M8 2Q14 0 18 5Q15 5 14 8Q10 8 8 2Z" fill="#5fb3e4" /><path d="M1 6Q4 5 7 7Q11 7 11 9L8 11Q8 15 13 15Q18 15 20 9Q21 18 13 21Q4 22 1 14Z" fill="#f0801e" /><path d="M19 4Q24 11 19 18Q22 11 18 6Z" fill="#fdce3a" /></svg></TaskButton>
        <TaskButton $open aria-label="Counter-Strike"><svg width="24" height="24" viewBox="0 0 24 24"><rect width="24" height="24" fill="#e39a35" /><path d="M0 0H24V5L15 8L0 6Z" fill="#f3b85a" /><path d="M5 4L8 4L8 7L12 6V8L9 9L8 12L10 19H8L6 14L4 20H2L4 11L3 8Z" fill="#1b1510" /><text x="10" y="17" fontFamily="Open Sans" fontWeight="700" fontSize="8" fill="#1b1510">GO</text></svg></TaskButton>
        <TaskButton $active aria-label="Sound"><Speaker s={24} /></TaskButton>
        <Tray>
          <svg width="11" height="7" fill="none" stroke="#fff"><path d="M.5 6L5.500 1L10.500 6" /></svg>
          <svg width="17" height="14" fill="none" stroke="#fff"><path d="M4.500 1.500H16.500V9.500H6M10.500 9.500V12.500M7 12.500H14M.5 3.500H4.500V8.500H.5ZM2.500 8.500V13" /></svg>
          <svg width="16" height="14" fill="none" stroke="#fff"><path d="M.5 4.500H3L7 1V13L3 9.500H.5ZM9 5Q10.500 7 9 9M11 3Q14 7 11 11M13 1Q17.500 7 13 13" /></svg>
          <svg width="16" height="16"><path d="M0 0H16V12H7L4 15.500V12H0Z" fill="#fff" /><path d="M3 3.500H13M3 6H13M3 8.500H13" stroke="#000" /></svg>
          <span>DEU</span>
          <time>20:34<br />16.09.2015</time>
        </Tray>
      </Taskbar>
    </Desktop>
  );
}
